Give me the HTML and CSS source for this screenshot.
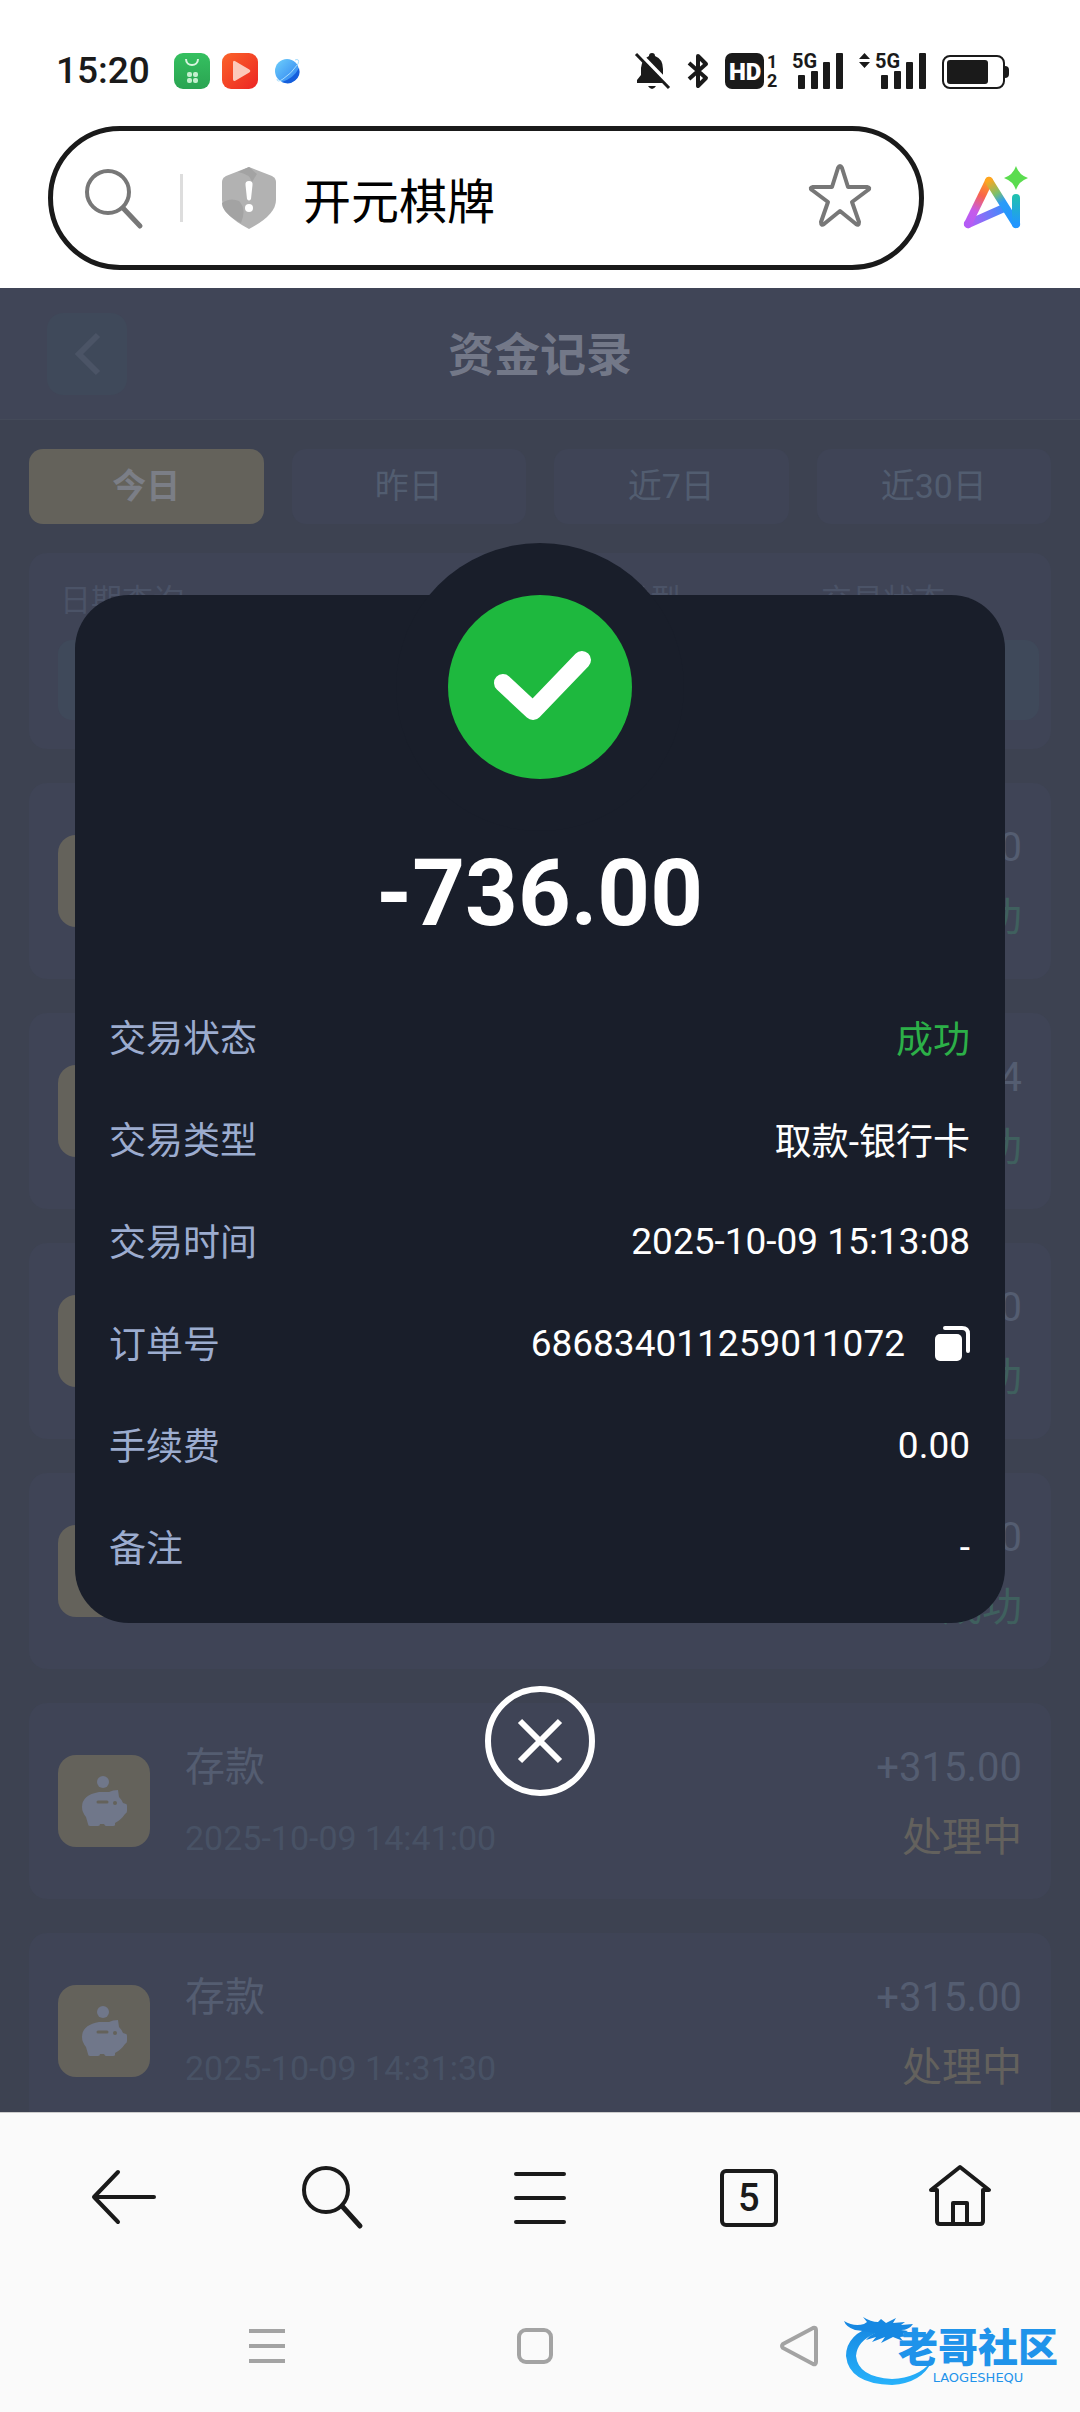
FILE: index.html
```html
<!DOCTYPE html>
<html lang="zh-CN">
<head>
	<meta charset="utf-8">
	<meta name="viewport" content="width=device-width, initial-scale=1">
	<title>资金记录</title>
	<link rel="stylesheet" href="styles.css">
</head>
<body>
	<div class="statusbar">
		<div class="status_left">
			<span class="clock">15:20</span>
			<svg width="36" height="36" viewBox="0 0 36 36">
				<defs><linearGradient id="gStore" x1="0" y1="0" x2="0" y2="1"><stop offset="0" stop-color="#35c060"/><stop offset="1" stop-color="#2aa452"/></linearGradient></defs>
				<rect width="36" height="36" rx="9" fill="url(#gStore)"/>
				<path d="M12 6c0 8 12 8 12 0" fill="none" stroke="#d8f5df" stroke-width="2"/>
				<g fill="#c4efce"><rect x="13" y="19" width="5" height="5" rx="2"/><rect x="19" y="19" width="5" height="5" rx="2"/><rect x="13" y="25" width="5" height="5" rx="2"/><rect x="19" y="25" width="5" height="5" rx="2"/></g>
			</svg>
			<svg width="36" height="36" viewBox="0 0 36 36">
				<defs><linearGradient id="gPlay" x1="0" y1="0" x2="1" y2="1"><stop offset="0" stop-color="#fb6429"/><stop offset="1" stop-color="#ec2424"/></linearGradient></defs>
				<rect width="36" height="36" rx="9" fill="url(#gPlay)"/>
				<path d="M11 9.500q0-2.500 2.300-1.200l14 8.200q2 1.500 0 3l-14 8.200q-2.300 1-2.300-1.500z" fill="#fcc9bb"/>
			</svg>
			<svg width="36" height="36" viewBox="0 0 36 36">
				<defs><linearGradient id="gOrb" x1="0" y1="0" x2="1" y2="1"><stop offset="0" stop-color="#6fd0fb"/><stop offset="1" stop-color="#2a7df0"/></linearGradient></defs>
				<circle cx="17" cy="18" r="12" fill="url(#gOrb)"/>
				<path d="M29 15a12 12 0 0 1-17 14q12-4 17-14z" fill="#155fdc"/>
				<path d="M25 7q5-2 3 4-7 10-15 15-6 4-6 0" fill="none" stroke="#a5dcfd" stroke-width="1"/>
			</svg>
		</div>
		<div class="status_right">
			<svg width="36" height="38" viewBox="0 0 36 38">
				<path d="M17 1a3 3 0 0 1 3 3q8 3 8 13v7l3 4v3H2v-3l4-5v-7Q7 7 14 4a3 3 0 0 1 3-3z" fill="#1a1a1a"/>
				<path d="M13 34h8q-4 6-8 0z" fill="#1a1a1a"/>
				<path d="M3 0l34 35" stroke="#fff" stroke-width="4"/>
				<path d="M1 2l33 34" stroke="#1a1a1a" stroke-width="3"/>
			</svg>
			<svg width="22" height="38" viewBox="0 0 22 38">
				<path d="M2 11l17 15-8 8V4l8 8L2 27" fill="none" stroke="#1a1a1a" stroke-width="4" stroke-linejoin="round"/>
			</svg>
			<svg width="51" height="38" viewBox="0 0 51 38">
				<rect y="1" width="39" height="36" rx="7" fill="#1a1a1a"/>
				<text class="st_hd" x="4" y="28">HD</text>
				<text class="st_num" x="42" y="16">1</text>
				<text class="st_num" x="42" y="35">2</text>
			</svg>
			<svg width="51" height="38" viewBox="0 0 51 38" fill="#1a1a1a">
				<text class="st_5g" x="0" y="16">5G</text>
				<rect x="6" y="23" width="7" height="14" rx="1"/><rect x="19" y="19" width="7" height="18" rx="1"/><rect x="31" y="10" width="7" height="27" rx="1"/><rect x="44" y="1" width="7" height="36" rx="1"/>
			</svg>
			<svg width="67" height="38" viewBox="0 0 67 38" fill="#1a1a1a">
				<path d="M0 7l5.500-6L11 7zM0 10l5.500 6L11 10z"/>
				<text class="st_5g" x="16" y="16">5G</text>
				<rect x="22" y="23" width="7" height="14" rx="1"/><rect x="35" y="19" width="7" height="18" rx="1"/><rect x="47" y="10" width="7" height="27" rx="1"/><rect x="60" y="1" width="7" height="36" rx="1"/>
			</svg>
			<svg width="67" height="38" viewBox="0 0 67 38">
				<rect x="1" y="4" width="61" height="32" rx="7" fill="none" stroke="#1a1a1a" stroke-width="2"/>
				<rect x="5" y="8" width="41" height="24" rx="3" fill="#1a1a1a"/>
				<path d="M63 14q4 0 4 4v4q0 4-4 4z" fill="#1a1a1a"/>
			</svg>
		</div>
	</div>

	<div class="addressbar">
		<div class="address">
			<svg width="60" height="60" viewBox="0 0 60 60" fill="none" stroke="#777" stroke-width="4" stroke-linecap="round">
				<circle cx="25" cy="24" r="21"/><path d="M40 40l17 18" stroke-width="5"/>
			</svg>
			<span class="divider"></span>
			<svg width="54" height="62" viewBox="0 0 54 62">
				<path d="M27 0l23 9q4 2 4 6v18q0 15-27 29Q0 48 0 33V15q0-4 4-6z" fill="#b2b2b2"/>
				<path d="M27 0L16 5q12 2 14 10l5-8zM0 36q8-6 17-2 8 8 2 22Q0 46 0 36z" fill="#a3a3a3"/>
				<path d="M27 14q4 0 3.500 4l-1.500 14q-2 3-4 0l-1.500-14q-.5-4 3.500-4z" fill="#fff"/><circle cx="27" cy="41" r="4" fill="#fff"/>
			</svg>
			<input class="address_input" type="text" aria-label="网址" value="开元棋牌">
			<button class="icon_button" type="button" aria-label="收藏">
				<svg width="62" height="62" viewBox="0 3 62 62" fill="none" stroke="#777" stroke-width="4" stroke-linejoin="round">
					<path d="M29 4q2-4 4 0l6 19h19q4 1 1 3L43 38l7 20q0 4-3 2L31 47 15 60q-3 2-3-2l7-20L3 26q-3-2 1-3h19z"/>
				</svg>
			</button>
		</div>
		<button class="icon_button" type="button" aria-label="AI">
			<svg width="66" height="64" viewBox="0 0 66 64" fill="none" stroke-width="8" stroke-linecap="round" stroke-linejoin="round">
				<defs>
					<linearGradient id="aiLeft" gradientUnits="userSpaceOnUse" x1="27" y1="14" x2="6" y2="58"><stop offset="0" stop-color="#ffa51e"/><stop offset=".35" stop-color="#f9644b"/><stop offset=".7" stop-color="#c65bea"/><stop offset="1" stop-color="#b45cf5"/></linearGradient>
					<linearGradient id="aiBar" gradientUnits="userSpaceOnUse" x1="6" y1="58" x2="43" y2="43"><stop offset="0" stop-color="#b95cf5"/><stop offset="1" stop-color="#3b8cfc"/></linearGradient>
					<linearGradient id="aiRight" gradientUnits="userSpaceOnUse" x1="27" y1="14" x2="54" y2="58"><stop offset="0" stop-color="#ffa51e"/><stop offset=".3" stop-color="#7cc06a"/><stop offset=".5" stop-color="#2a9bf8"/><stop offset="1" stop-color="#2196ff"/></linearGradient>
					<linearGradient id="aiStem" gradientUnits="userSpaceOnUse" x1="54" y1="30" x2="54" y2="58"><stop offset="0" stop-color="#20c0b0"/><stop offset="1" stop-color="#2196ff"/></linearGradient>
				</defs>
				<path d="M6 58l36-16" stroke="url(#aiBar)"/>
				<path d="M27 15L6 58" stroke="url(#aiLeft)"/>
				<path d="M27 15l27 43" stroke="url(#aiRight)"/>
				<path d="M54 32v26" stroke="url(#aiStem)"/>
				<path d="M54 0q3 9 12 12-9 3-12 12-3-9-12-12 9-3 12-12z" fill="#5bdc4f"/>
			</svg>
		</button>
	</div>

	<main class="app">
		<header class="app_header">
			<button class="back" type="button" aria-label="返回">
				<svg width="28" height="44" viewBox="0 0 28 44" fill="none" stroke="#4b5466" stroke-width="6"><path d="M25 3L6 22l19 19"/></svg>
			</button>
			<h1>资金记录</h1>
		</header>

		<div class="tabs">
			<button class="tab active" type="button">今日</button>
			<button class="tab" type="button">昨日</button>
			<button class="tab" type="button">近7日</button>
			<button class="tab" type="button">近30日</button>
		</div>

		<form class="card filter">
			<div class="field date">
				<label for="date">日期查询</label>
				<input class="control" id="date" type="text">
			</div>
			<div class="field">
				<label for="type">交易类型</label>
				<select class="control" id="type"><option></option></select>
			</div>
			<div class="field">
				<label for="state">交易状态</label>
				<select class="control" id="state"><option></option></select>
			</div>
		</form>

		<ul class="records">
			<li class="card record">
				<span class="badge"></span>
				<div class="sum"><span>-736.00</span><span class="ok">成功</span></div>
			</li>
			<li class="card record">
				<span class="badge"></span>
				<div class="sum"><span>4</span><span class="ok">成功</span></div>
			</li>
			<li class="card record">
				<span class="badge"></span>
				<div class="sum"><span>0</span><span class="ok">成功</span></div>
			</li>
			<li class="card record">
				<span class="badge"></span>
				<div class="sum"><span>0</span><span class="ok">成功</span></div>
			</li>
			<li class="card record">
				<span class="badge"><svg width="46" height="50" viewBox="0 0 46 50"><use href="#pig"/></svg></span>
				<div class="info"><span>存款</span><time>2025-10-09 14:41:00</time></div>
				<div class="sum"><span>+315.00</span><span class="pending">处理中</span></div>
			</li>
			<li class="card record">
				<span class="badge"><svg width="46" height="50" viewBox="0 0 46 50">
					<g id="pig">
						<circle cx="22" cy="6" r="6" fill="#70778a"/>
						<path d="M18 16h10q4-2 9-2l1 7q3 3 4 6l3 1q1 0 1 2v5q0 2-2 3-4 6-10 9v2q0 1-2 1h-7q-1 0-2-2h-4q0 2-2 2H9q-2 0-2-2l-2-7q-4-5-4-10Q1 19 18 16z" fill="#70778a"/>
						<path d="M17 26h9" stroke="#64625b" stroke-width="3" stroke-linecap="round"/><circle cx="34" cy="27" r="2" fill="#64625b"/>
					</g>
				</svg></span>
				<div class="info"><span>存款</span><time>2025-10-09 14:31:30</time></div>
				<div class="sum"><span>+315.00</span><span class="pending">处理中</span></div>
			</li>
		</ul>

		<div class="overlay">
			<section class="dialog" role="dialog" aria-label="交易详情">
				<svg class="result" width="184" height="184" viewBox="0 0 184 184">
					<circle cx="92" cy="92" r="92" fill="#1eb83e"/>
					<path d="M55 88l30 28 49-51" fill="none" stroke="#fff" stroke-width="18" stroke-linecap="round" stroke-linejoin="round"/>
				</svg>
				<p class="amount">-736.00</p>
				<dl class="details">
					<div><dt>交易状态</dt><dd class="success">成功</dd></div>
					<div><dt>交易类型</dt><dd>取款-银行卡</dd></div>
					<div><dt>交易时间</dt><dd>2025-10-09 15:13:08</dd></div>
					<div>
						<dt>订单号</dt>
						<dd>686834011259011072
							<button class="icon_button" type="button" aria-label="复制">
								<svg width="35" height="35" viewBox="0 0 35 35"><rect y="8" width="27" height="27" rx="5" fill="#fff"/><path d="M10 2h17q6 0 6 6v17" fill="none" stroke="#fff" stroke-width="4" stroke-linecap="round"/></svg>
							</button>
						</dd>
					</div>
					<div><dt>手续费</dt><dd>0.00</dd></div>
					<div><dt>备注</dt><dd>-</dd></div>
				</dl>
			</section>
			<button class="icon_button close" type="button" aria-label="关闭">
				<svg width="110" height="110" viewBox="0 0 110 110" fill="none" stroke="#fff" stroke-width="6"><circle cx="55" cy="55" r="52"/><path d="M35 35l40 40M75 35L35 75"/></svg>
			</button>
		</div>
	</main>

	<nav class="toolbar">
		<button class="icon_button" type="button" aria-label="后退">
			<svg width="72" height="72" viewBox="0 0 72 72"><path d="M32 10L8 35l24 25M8 35h60"/></svg>
		</button>
		<button class="icon_button" type="button" aria-label="搜索">
			<svg width="72" height="72" viewBox="0 0 72 72"><circle cx="31" cy="28" r="22"/><path d="M47 44l18 20" stroke-width="5"/></svg>
		</button>
		<button class="icon_button" type="button" aria-label="菜单">
			<svg width="72" height="72" viewBox="0 0 72 72"><path d="M12 12h48M12 36h48M12 60h48"/></svg>
		</button>
		<button class="icon_button tab_count" type="button" aria-label="标签页">5</button>
		<button class="icon_button" type="button" aria-label="主页">
			<svg width="72" height="72" viewBox="0 0 72 72"><path d="M15 28H9L38 5l29 23h-6v31q0 3-3 3H18q-3 0-3-3zM31 62V41h14v21"/></svg>
		</button>
	</nav>
	<nav class="sysnav">
		<button class="icon_button" type="button" aria-label="最近任务">
			<svg width="40" height="40" viewBox="0 0 40 40"><path d="M2 5h36M2 20h36M2 35h36"/></svg>
		</button>
		<button class="icon_button" type="button" aria-label="桌面">
			<svg width="40" height="40" viewBox="0 0 40 40"><rect x="6" y="4" width="32" height="32" rx="7"/></svg>
		</button>
		<button class="icon_button" type="button" aria-label="返回上级">
			<svg width="40" height="40" viewBox="0 0 40 40"><path d="M4 18L34 2q3-1 3 2v32q0 3-3 2L4 22q-2-2 0-4z"/></svg>
		</button>
	</nav>

	<!-- watermark -->
	<div class="watermark">
		<svg width="92" height="76" viewBox="0 0 92 76">
			<defs><linearGradient id="dragon" x1="0" y1="0" x2="0" y2="1"><stop offset="0" stop-color="#1688e2"/><stop offset="1" stop-color="#27b2fb"/></linearGradient></defs>
			<path d="M34 11Q4 20 4 42q3 28 46 29 30-2 40-24Q76 64 50 65 16 63 14 42q1-15 20-23z" fill="url(#dragon)"/>
			<path d="M2 7q10 6 20 3l3-2-4-5q8 5 15 5l3-3 5 4 10-5-3 5 12-1-4 3 12-1q-4 6-12 6l7 1-5 3 6 2-9 1 3 4-10-4-12 6 4-6-13 5 4-5-10 3q4-5 9-7-12-2-20-3Q4 13 2 7z" fill="#1688e2"/>
		</svg>
		<div class="watermark_text">
			<strong>老哥社区</strong>
			<small>LAOGESHEQU</small>
		</div>
	</div>
</body>
</html>
```

FILE: styles.css
```css
* { box-sizing: border-box; }
html, body { height: 100%; }
body {
	margin: 0;
	display: flex;
	flex-direction: column;
	position: relative;
	overflow: hidden;
	background: #fff;
	color: #1a1a1a;
	font-family: Roboto, "Noto Sans CJK SC", sans-serif;
}
h1, p, dl, dd, ul { margin: 0; padding: 0; }
button, input, select { font: inherit; color: inherit; border: 0; padding: 0; background: none; }
svg { display: block; flex: none; overflow: visible; }
.icon_button { flex: none; }

/* Phone status bar */

.statusbar {
	display: flex;
	justify-content: space-between;
	align-items: center;
	padding: 47px 71px 0 56px;
	line-height: 48px;
}
.status_left, .status_right { display: flex; align-items: center; }
.status_left { gap: 12px; }
.status_right { gap: 16px; }
.clock { margin-right: 12px; font-size: 37px; font-weight: 500; }
.st_hd { font-size: 24px; font-weight: 900; fill: #fff; }
.st_num { font-size: 18px; font-weight: 700; fill: #1a1a1a; }
.st_5g { font-size: 20px; font-weight: 700; }

/* Address bar */

.addressbar {
	display: flex;
	align-items: center;
	gap: 38px;
	padding: 31px 52px 18px 48px;
}
.address {
	flex: 1;
	min-width: 0;
	display: flex;
	align-items: center;
	height: 144px;
	padding: 0 48px 0 30px;
	border: 5px solid #1a1a1a;
	border-radius: 72px;
}
.divider { width: 3px; height: 48px; margin: 0 39px 0 37px; background: #ddd; }
.address_input {
	flex: 1;
	min-width: 0;
	margin-left: 27px;
	color: #000;
	font-size: 48px;
	outline: 0;
}

/* App page */

.app {
	flex: 1;
	min-height: 0;
	position: relative;
	overflow: hidden;
	background: #3d4251;
	color: #545d71;
}
.app_header {
	display: grid;
	grid-template-columns: 80px 1fr 80px;
	align-items: center;
	height: 132px;
	padding: 0 47px;
	background: #404557;
	border-bottom: 1px solid #444a59;
}
.app_header h1 { padding-bottom: 6px; color: #737888; font-size: 46px; text-align: center; }
.back {
	display: flex;
	align-items: center;
	justify-content: center;
	height: 82px;
	border-radius: 16px;
	background: #3f495a;
}
.tabs { display: flex; gap: 28px; padding: 29px; }
.tab {
	flex: 1;
	height: 75px;
	padding-bottom: 6px;
	border-radius: 14px;
	background: #3f4456;
	color: #525d70;
	font-size: 34px;
}
.tab.active { background: #64625b; color: #7b7e86; font-weight: 700; }
.card { margin: 0 29px 34px; border-radius: 18px; background: #3f4456; }
.filter { display: flex; gap: 44px; height: 196px; padding: 24px 12px 0 29px; }
.field { width: 220px; color: #4b5367; font-size: 31px; }
.field.date { flex: 1; }
.field label { display: block; line-height: 48px; padding-left: 2px; }
.control {
	display: block;
	width: 100%;
	height: 80px;
	margin-top: 15px;
	border-radius: 14px;
	background: #3f495a;
	appearance: none;
}
.records { list-style: none; }
.record {
	display: flex;
	align-items: center;
	gap: 35px;
	height: 196px;
	padding: 0 29px;
	font-size: 40px;
}
.badge {
	display: flex;
	align-items: center;
	justify-content: center;
	width: 92px;
	height: 92px;
	border-radius: 18px;
	background: #64625b;
}
.info, .sum { display: flex; flex-direction: column; padding-top: 4px; line-height: 70px; }
.info time { color: #485265; font-size: 34px; }
.sum { margin-left: auto; text-align: right; }
.ok { color: #3f605e; }
.pending { color: #63615d; }

/* Transaction dialog */

.overlay {
	position: absolute;
	inset: 0;
	display: flex;
	flex-direction: column;
	align-items: center;
	padding: 307px 75px 0;
}
.dialog {
	position: relative;
	width: 100%;
	padding: 0 35px 25px 34px;
	border-radius: 54px;
	background: #191e2a;
	color: #fff;
}
.dialog::before {
	content: "";
	position: absolute;
	top: -52px;
	left: 50%;
	width: 288px;
	height: 288px;
	margin-left: -144px;
	border-radius: 50%;
	background: #191e2a;
}
.result { position: relative; margin: 0 auto; }
.amount {
	position: relative;
	padding: 60px 0 37px;
	font-size: 92px;
	font-weight: 700;
	line-height: 110px;
	text-align: center;
}
.details { font-size: 37px; }
.details div {
	display: flex;
	align-items: center;
	justify-content: space-between;
	height: 102px;
}
.details dt { padding-bottom: 3px; color: #9caccf; }
.details dd { display: flex; align-items: center; gap: 30px; }
.details .success { color: #2cb048; }
.close { margin-top: 63px; }

/* Bottom bars */

.toolbar {
	display: flex;
	align-items: center;
	justify-content: space-around;
	padding: 49px 18px 50px;
	border-top: 1px solid #ccc;
	background: #fafafa;
}
.toolbar svg { fill: none; stroke: #1a1a1a; stroke-width: 4; stroke-linecap: round; stroke-linejoin: round; }
.tab_count {
	width: 58px;
	height: 58px;
	margin: 0 7px;
	border: 4px solid #1a1a1a;
	border-radius: 6px;
	font-size: 38px;
	font-weight: 500;
	line-height: 50px;
}
.sysnav {
	display: flex;
	justify-content: center;
	gap: 226px;
	padding: 42px 14px 46px 0;
	background: #fafafa;
}
.sysnav svg { fill: none; stroke: #a3a3a3; stroke-width: 4; }
.watermark {
	position: absolute;
	right: 22px;
	bottom: 22px;
	display: flex;
}
.watermark_text {
	display: flex;
	flex-direction: column;
	align-items: center;
	margin: 13px 0 0 -36px;
	color: #1f93ea;
}
.watermark_text strong { font-size: 40px; font-weight: 900; line-height: 44px; }
.watermark_text small { font-family: "DejaVu Sans", sans-serif; font-size: 13px; line-height: 14px; }
```
